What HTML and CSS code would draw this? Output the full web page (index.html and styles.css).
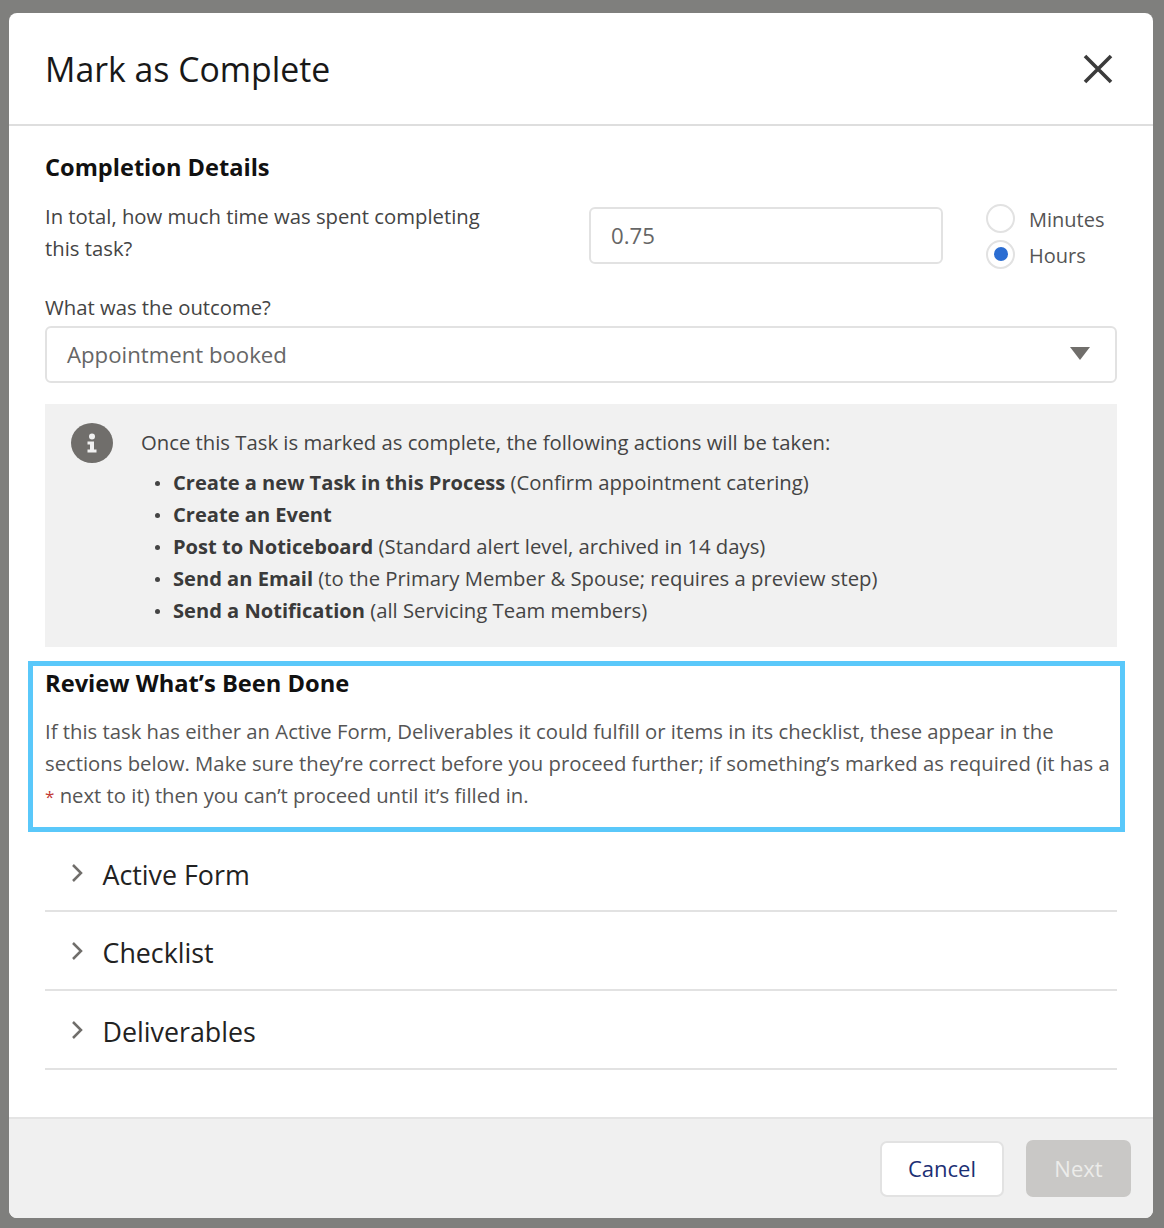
FILE: index.html
```html
<!DOCTYPE html>
<html lang="en">
<head>
<meta charset="utf-8">
<title>Mark as Complete</title>
<link rel="stylesheet" href="styles.css">
</head>
<body>
<div class="modal">
  <header class="modal-head">
    <h1 class="modal-title">Mark as Complete</h1>
    <svg class="close" viewBox="0 0 30 30" width="30" height="30" aria-label="Close"><path d="M2 2 L28 28 M28 2 L2 28"/></svg>
  </header>
  <main class="modal-body">
    <h2 class="section-title">Completion Details</h2>
    <div class="time-row">
      <p class="time-label">In total, how much time was spent completing this task?</p>
      <div class="field time-input">0.75</div>
      <div class="radios">
        <div class="radio-row"><span class="radio"></span><span class="radio-text">Minutes</span></div>
        <div class="radio-row"><span class="radio radio-on"></span><span class="radio-text">Hours</span></div>
      </div>
    </div>
    <p class="outcome-label">What was the outcome?</p>
    <div class="field select">
      <span>Appointment booked</span>
      <svg class="caret" viewBox="0 0 20 14" width="20" height="14"><path d="M0 0 H20 L10 13 Z"/></svg>
    </div>
    <section class="info">
      <span class="info-icon">
        <svg viewBox="0 0 12 22" width="12" height="22"><circle cx="6" cy="4.5" r="3"/><path d="M1.500 9.500 H8 V17.500 H10.500 V20.500 H1.500 V17.500 H4 V12.500 H1.500 Z"/></svg>
      </span>
      <div class="info-content">
        <p class="info-lead">Once this Task is marked as complete, the following actions will be taken:</p>
        <ul class="info-list">
          <li><b>Create a new Task in this Process</b> (Confirm appointment catering)</li>
          <li><b>Create an Event</b></li>
          <li><b>Post to Noticeboard</b> (Standard alert level, archived in 14 days)</li>
          <li><b>Send an Email</b> (to the Primary Member &amp; Spouse; requires a preview step)</li>
          <li><b>Send a Notification</b> (all Servicing Team members)</li>
        </ul>
      </div>
    </section>
    <section class="review">
      <h2 class="review-title">Review What’s Been Done</h2>
      <p class="review-text">If this task has either an Active Form, Deliverables it could fulfill or items in its checklist, these appear in the sections below. Make sure they’re correct before you proceed further; if something’s marked as required (it has a <span class="req">*</span> next to it) then you can’t proceed until it’s filled in.</p>
    </section>
    <div class="accordion">
      <div class="acc-row"><svg class="chev" viewBox="0 0 12 20" width="12" height="20"><path d="M2 2 L10 10 L2 18"/></svg><span>Active Form</span></div>
      <div class="acc-row"><svg class="chev" viewBox="0 0 12 20" width="12" height="20"><path d="M2 2 L10 10 L2 18"/></svg><span>Checklist</span></div>
      <div class="acc-row"><svg class="chev" viewBox="0 0 12 20" width="12" height="20"><path d="M2 2 L10 10 L2 18"/></svg><span>Deliverables</span></div>
    </div>
  </main>
  <footer class="modal-foot">
    <button class="btn btn-cancel">Cancel</button>
    <button class="btn btn-next">Next</button>
  </footer>
</div>
</body>
</html>
```
FILE: styles.css
```css
* { box-sizing: border-box; }
html, body { margin: 0; height: 100%; }
body {
  background: #7f7f7d;
  padding: 13px 11px 10px 9px;
  font-family: "Open Sans", "Noto Sans", sans-serif;
  color: #444;
  font-size: 20.3px;
}
p, h1, h2, ul { margin: 0; padding: 0; }
.modal {
  background: #fff;
  border-radius: 8px;
  height: 1205px;
  display: flex;
  flex-direction: column;
  overflow: hidden;
}
.modal-head {
  height: 113px;
  flex: none;
  border-bottom: 2px solid #dedede;
  display: flex;
  align-items: center;
  justify-content: space-between;
  padding: 0 40px 0 36px;
}
.modal-title { font-size: 33.8px; font-weight: 400; color: #181818; }
.close { fill: none; stroke: #3b3b3b; stroke-width: 3.600; }
.modal-body { flex: 1; padding: 0 36px; }
.section-title { font-size: 23.6px; font-weight: 700; color: #111; line-height: 32px; margin-top: 25px; }
.time-row { display: flex; margin-top: 24px; height: 72px; }
.time-label { width: 544px; line-height: 32px; padding-right: 90px; flex: none; margin-top: -7px; }
.field {
  border: 2px solid #e2e2e2;
  border-radius: 6px;
  background: #fff;
  color: #666;
  height: 57px;
  display: flex;
  align-items: center;
  font-size: 22.2px;
}
.time-input { width: 354px; padding-left: 20px; flex: none; }
.radios { margin-left: 43px; margin-top: -7px; }
.radio-row { display: flex; align-items: center; height: 36px; }
.radio { width: 29px; height: 29px; border-radius: 50%; border: 2px solid #e2e2e2; background: #fff; flex: none; margin-right: 14px; display: flex; align-items: center; justify-content: center; }
.radio-on::after { content: ""; width: 14px; height: 14px; border-radius: 50%; background: #2b6dd2; }
.radio-text { color: #555; font-size: 20px; position: relative; top: 1px; }
.outcome-label { line-height: 30px; margin-top: 13px; }
.select { justify-content: space-between; padding: 0 25px 0 20px; margin-top: 4px; }
.caret { fill: #706e6b; margin-bottom: 1px; }
.info {
  background: #f1f1f1;
  height: 243px;
  margin-top: 21px;
  display: flex;
  padding: 19px 0 0 26px;
}
.info-icon {
  width: 42px; height: 40px; border-radius: 50%; background: #706e6b; flex: none;
  display: flex; align-items: center; justify-content: center;
  margin-right: 28px;
}
.info-icon svg { fill: #f1f1f1; }
.info-content { flex: 1; }
.info-lead { line-height: 38px; margin: 0 0 5px; }
.info-list { list-style: none; }
.info-list li { height: 32px; line-height: 32px; padding-left: 32px; position: relative; color: #444; }
.info-list li::before { content: ""; position: absolute; left: 14px; top: 15px; width: 5px; height: 5px; border-radius: 50%; background: #444; }
.info-list b { font-weight: 700; font-size: 20.1px; line-height: 1; color: #3a3a3a; }
.review {
  margin: 14px -8px 0 -17px;
  height: 171px;
  border: 5px solid #5ac8fa;
  padding: 0 3px 0 12px;
}
.review-title { font-size: 23.7px; font-weight: 700; color: #111; line-height: 32px; margin-top: 1px; }
.review-text { line-height: 32px; margin-top: 16px; color: #555; }
.req { color: #c23934; font-size: 17px; line-height: 1; }
.acc-row {
  height: 79px;
  border-bottom: 2px solid #e2e2e2;
  display: flex;
  align-items: center;
  padding: 3px 0 0 26px;
  font-size: 26.8px;
  color: #222;
}
.acc-row:first-child { height: 80px; padding-top: 6px; }
.chev { fill: none; stroke: #706e6b; stroke-width: 2.500; margin-right: 19.500px; margin-bottom: 3px; }
.modal-foot {
  height: 101px;
  flex: none;
  background: #f0f0f0;
  border-top: 2px solid #e4e4e4;
  display: flex;
  justify-content: flex-end;
  align-items: center;
  gap: 22px;
  padding: 0 22px 0 0;
}
.btn { font-family: inherit; font-size: 22px; border-radius: 7px; height: 57px; padding: 0 0 2px; }
.btn-cancel { width: 124px; height: 56px; background: #fff; border: 2px solid #e2e2e2; color: #1b2f74; }
.btn-next { width: 105px; background: #c9c8c6; border: none; color: #ececea; }
```
